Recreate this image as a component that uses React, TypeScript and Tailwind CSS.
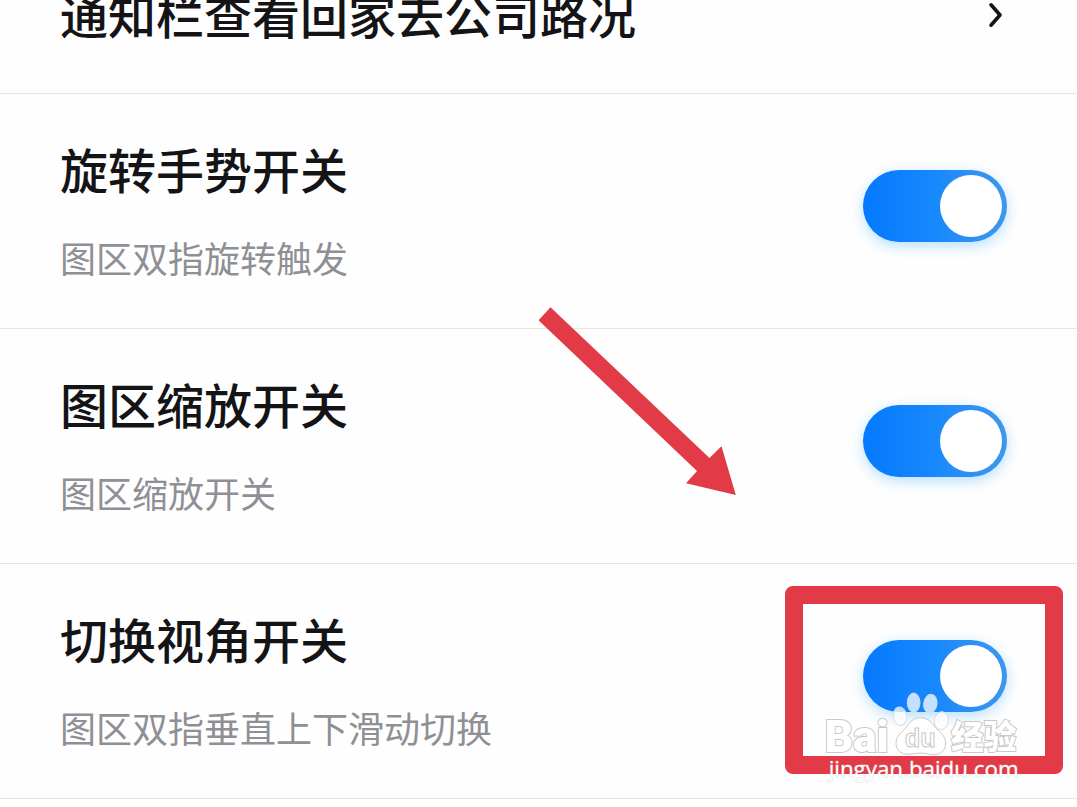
import { useState } from "react";

const settings = [
  {
    id: "rotate",
    title: "旋转手势开关",
    description: "图区双指旋转触发",
  },
  {
    id: "zoom",
    title: "图区缩放开关",
    description: "图区缩放开关",
  },
  {
    id: "angle",
    title: "切换视角开关",
    description: "图区双指垂直上下滑动切换",
    highlighted: true,
  },
];

const Switch = ({ id }: { id: string }) => {
  const [checked, setChecked] = useState(true);

  return (
    <label
      htmlFor={id}
      className="mt-8 flex h-[72px] w-36 shrink-0 cursor-pointer items-center rounded-full bg-gray-300 p-[5px] has-checked:justify-end has-checked:bg-linear-to-r has-checked:from-[#0579ff] has-checked:via-[#1788fc] has-checked:to-[#3e97ec] has-checked:shadow-[0_4px_14px_rgba(50,165,255,0.35)]"
    >
      <input
        id={id}
        type="checkbox"
        role="switch"
        aria-labelledby={`${id}-title`}
        checked={checked}
        onChange={(e) => setChecked(e.target.checked)}
        className="sr-only"
      />
      <span className="size-[62px] rounded-full bg-white"></span>
    </label>
  );
};

const Arrow = () => (
  <svg
    viewBox="0 0 198 189"
    className="pointer-events-none absolute top-[307px] left-1/2 h-[189px] w-[198px]"
    fill="#e23a46"
    aria-hidden="true"
  >
    <path d="M11.5 .3 -.5 13.3 158 164 147 176.3 196.8 188 182.5 139.3 170.5 151Z" />
  </svg>
);

const Watermark = () => (
  <svg
    viewBox="0 0 630 315"
    className="pointer-events-none absolute right-[47px] bottom-[8px] h-[105px] w-[210px]"
    fill="#ffffff"
    stroke="#c9c9c9"
    strokeWidth="3"
  >
    <g fillOpacity="0.75" stroke="#d4dce4">
      <ellipse cx="240" cy="94" rx="20" ry="28" transform="rotate(-8 240 94)" />
      <ellipse cx="281" cy="53" rx="19" ry="29" />
      <ellipse cx="331" cy="56" rx="20" ry="28" transform="rotate(8 331 56)" />
      <ellipse cx="364" cy="107" rx="21" ry="27" transform="rotate(8 364 107)" />
    </g>
    <path
      fillOpacity="0.9"
      d="M302 98c-20 0-32 13-40 25-9 14-34 26-34 51 0 22 16 34 36 34 13 0 26-4 38-4s26 5 39 5c21 0 36-13 36-35 0-26-25-36-35-51-9-13-20-25-40-25Z"
    />
    <text
      x="14"
      y="202"
      fontSize="132"
      paintOrder="stroke"
      strokeWidth="6"
      className="font-[Roboto,sans-serif] font-black"
    >
      Bai
    </text>
    <text
      x="254"
      y="187"
      fontSize="76"
      className="font-['Liberation_Sans',sans-serif] font-bold"
    >
      du
    </text>
    <text
      x="393"
      y="192"
      fontSize="98"
      paintOrder="stroke"
      strokeWidth="6"
      className="font-['Noto_Sans_CJK_SC',sans-serif] font-black"
    >
      经验
    </text>
    <text
      x="26"
      y="275"
      fontSize="67"
      paintOrder="stroke"
      strokeOpacity="0.6"
      className="font-['Open_Sans',sans-serif]"
    >
      jingyan.baidu.com
    </text>
  </svg>
);

const App = () => {
  return (
    <main className="relative overflow-hidden bg-[#fefefe] font-['Noto_Sans_CJK_SC',sans-serif] text-[#141416]">
      {/* Link row, scrolled partly past the top edge */}
      <a
        href="#traffic"
        className="-mt-[17px] flex items-center justify-between border-b border-[#e6e6e6] pr-[74px] pb-[50px] pl-[60px]"
      >
        <span className="text-5xl leading-[60px] font-medium">
          通知栏查看回家去公司路况
        </span>
        <svg
          viewBox="0 0 16 30"
          className="mt-1 h-[30px] w-4"
          fill="none"
          stroke="currentColor"
          strokeWidth="3.6"
          strokeLinecap="round"
          strokeLinejoin="round"
          aria-hidden="true"
        >
          <path d="M4 4.8 13 15 4 25.2" />
        </svg>
      </a>

      {/* Switch rows */}
      {settings.map((item) => (
        <section
          key={item.id}
          className="relative flex items-start justify-between border-b border-[#e6e6e6] pt-11 pr-[70px] pb-[49px] pl-[60px]"
        >
          <div>
            <h2
              id={`${item.id}-title`}
              className="text-5xl leading-[60px] font-medium"
            >
              {item.title}
            </h2>
            <p className="mt-[37px] text-4xl leading-11 text-[#8f9095]">
              {item.description}
            </p>
          </div>
          <Switch id={item.id} />
          {item.highlighted && (
            <>
              <div className="pointer-events-none absolute top-[22px] right-3.5 h-[188px] w-[278px] rounded-lg border-18 border-[#e23a46]"></div>
              <Watermark />
            </>
          )}
        </section>
      ))}

      <Arrow />
    </main>
  );
};

export default App;
